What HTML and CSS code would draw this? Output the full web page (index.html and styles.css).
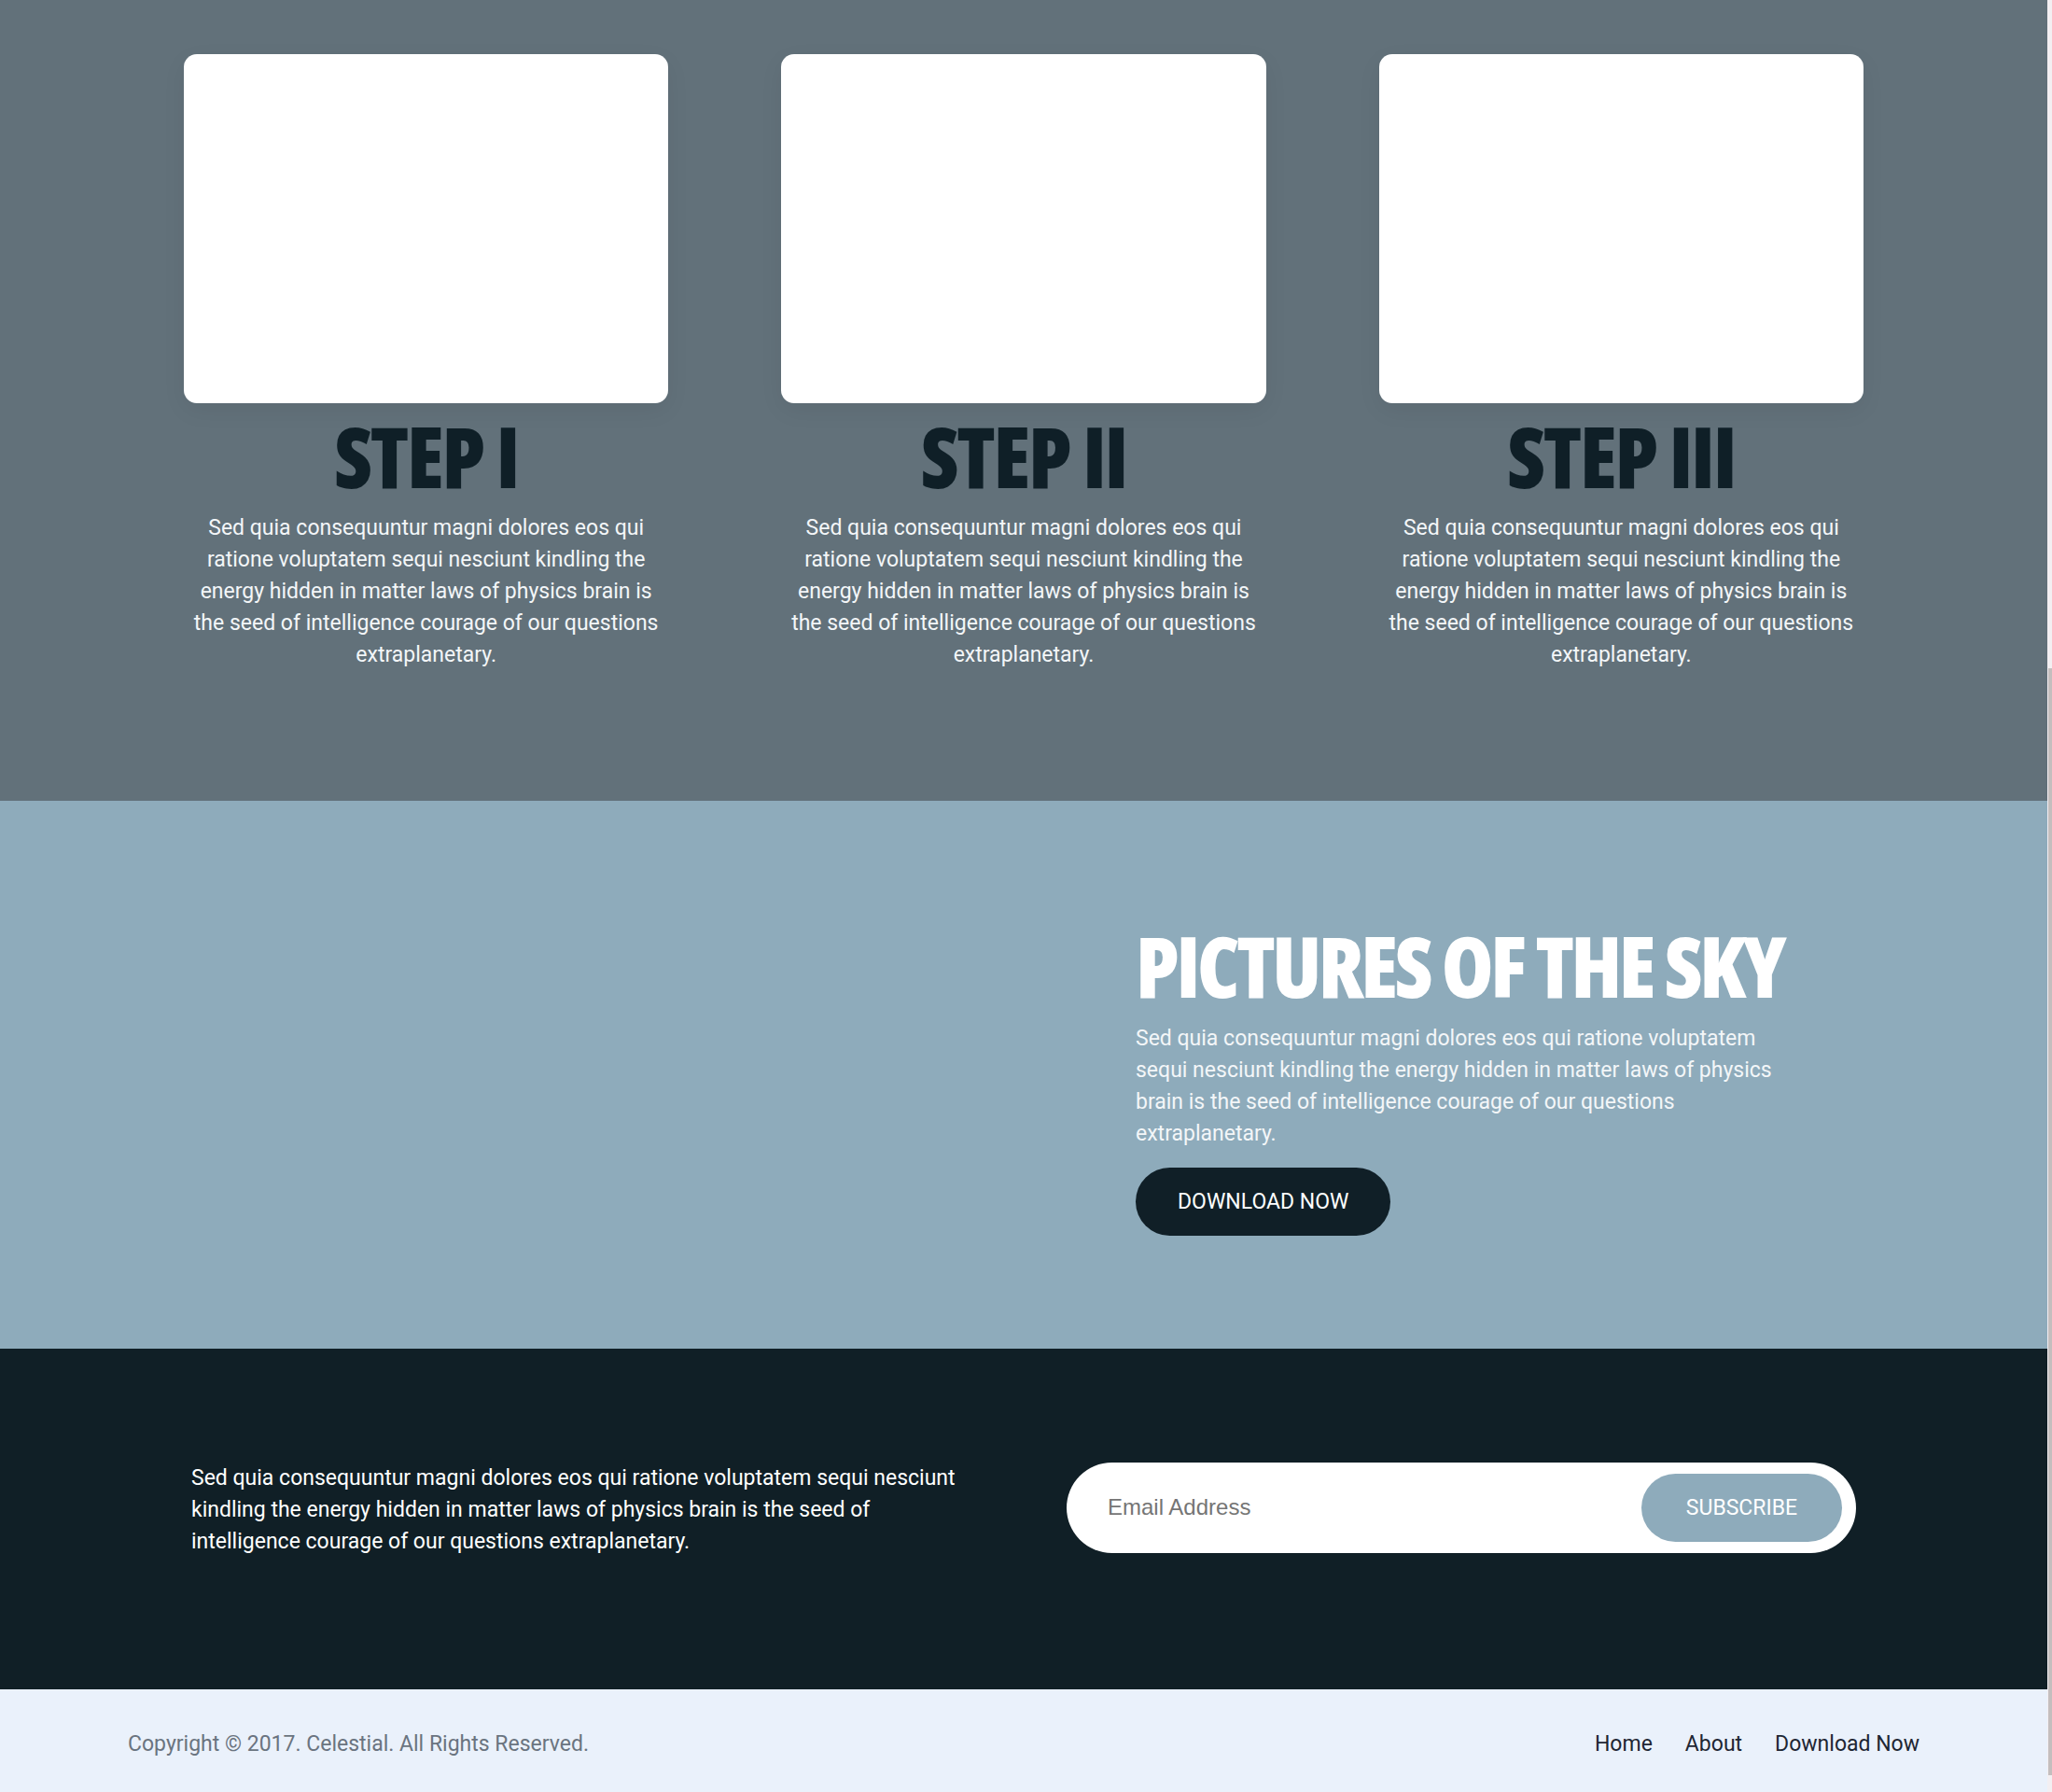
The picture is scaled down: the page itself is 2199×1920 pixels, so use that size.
FILE: index.html
```html
<!DOCTYPE html>
<html lang="en">
<head>
<meta charset="utf-8">
<title>Celestial</title>
<link rel="stylesheet" href="styles.css">
</head>
<body>
<div class="page">
  <section class="steps">
    <div class="container steps-grid">
      <div class="step">
        <div class="step-card"></div>
        <h2 class="step-title">STEP I</h2>
        <p class="step-text">Sed quia consequuntur magni dolores eos qui ratione voluptatem sequi nesciunt kindling the energy hidden in matter laws of physics brain is the seed of intelligence courage of our questions extraplanetary.</p>
      </div>
      <div class="step">
        <div class="step-card"></div>
        <h2 class="step-title">STEP II</h2>
        <p class="step-text">Sed quia consequuntur magni dolores eos qui ratione voluptatem sequi nesciunt kindling the energy hidden in matter laws of physics brain is the seed of intelligence courage of our questions extraplanetary.</p>
      </div>
      <div class="step">
        <div class="step-card"></div>
        <h2 class="step-title">STEP III</h2>
        <p class="step-text">Sed quia consequuntur magni dolores eos qui ratione voluptatem sequi nesciunt kindling the energy hidden in matter laws of physics brain is the seed of intelligence courage of our questions extraplanetary.</p>
      </div>
    </div>
  </section>

  <section class="sky">
    <div class="container sky-grid">
      <div class="sky-media"></div>
      <div class="sky-text">
        <h2 class="sky-title">PICTURES OF THE SKY</h2>
        <p class="sky-copy">Sed quia consequuntur magni dolores eos qui ratione voluptatem sequi nesciunt kindling the energy hidden in matter laws of physics brain is the seed of intelligence courage of our questions extraplanetary.</p>
        <a class="btn-dark" href="#">DOWNLOAD NOW</a>
      </div>
    </div>
  </section>

  <section class="newsletter">
    <div class="container news-grid">
      <p class="news-copy">Sed quia consequuntur magni dolores eos qui ratione voluptatem sequi nesciunt kindling the energy hidden in matter laws of physics brain is the seed of intelligence courage of our questions extraplanetary.</p>
      <form class="subscribe" action="#">
        <input class="subscribe-input" type="email" placeholder="Email Address">
        <button class="subscribe-btn" type="button">SUBSCRIBE</button>
      </form>
    </div>
  </section>

  <footer class="footer">
    <div class="footer-inner">
      <p class="copyright">Copyright © 2017. Celestial. All Rights Reserved.</p>
      <nav class="footer-nav">
        <a href="#">Home</a>
        <a href="#">About</a>
        <a href="#">Download Now</a>
      </nav>
    </div>
  </footer>
</div>
<div class="scrollbar"><div class="scrollbar-thumb"></div></div>
</body>
</html>
```
FILE: styles.css
```css
* { box-sizing: border-box; }

body {
  margin: 0;
  font-family: Roboto, "Liberation Sans", sans-serif;
  font-size: 23px;
  line-height: 34px;
  background: #eaf1fb;
}

.page { margin-right: 5px; }

.container {
  width: 1800px;
  margin: 0 auto;
}

/* ---------- steps ---------- */
.steps {
  background: #62717a;
  padding: 58px 0 139px;
}

.steps-grid {
  display: grid;
  grid-template-columns: repeat(3, 1fr);
  column-gap: 121px;
}

.step-card {
  height: 374px;
  background: #fff;
  border-radius: 14px;
  box-shadow: 0 8px 26px rgba(0, 0, 0, 0.06);
}

.step-title {
  margin: 7px 0 0;
  font-family: "Open Sans", sans-serif;
  font-stretch: 75%;
  font-weight: 800;
  font-size: 90px;
  line-height: 99px;
  letter-spacing: -2.3px;
  text-align: center;
  color: #0f1f27;
}

.step-text {
  margin: 11px 0 0;
  padding: 0 4px;
  text-align: center;
  color: #f3f6f8;
}

/* ---------- sky ---------- */
.sky {
  background: #8eabbb;
  padding: 127px 0 121px;
}

.sky-grid {
  display: grid;
  grid-template-columns: 1020px 700px;
}

.sky-title {
  margin: 0;
  font-family: "Open Sans", sans-serif;
  font-stretch: 75%;
  font-weight: 800;
  font-size: 90px;
  line-height: 99px;
  letter-spacing: -3.4px;
  color: #ffffff;
}

.sky-copy {
  margin: 12px 0 0;
  color: #f3f6f8;
}

.btn-dark {
  display: inline-block;
  margin-top: 19px;
  height: 73px;
  padding: 0 45px;
  border-radius: 37px;
  background: #101f27;
  color: #ffffff;
  line-height: 73px;
  text-decoration: none;
}

/* ---------- newsletter ---------- */
.newsletter {
  background: #101f26;
  padding: 116px 0 141px;
}

.news-grid {
  padding: 0 8px;
  display: grid;
  grid-template-columns: 1fr 846px;
  align-items: center;
}

.news-copy {
  margin: 6px 0 0;
  max-width: 840px;
  color: #ffffff;
}

.subscribe {
  display: flex;
  align-items: center;
  height: 97px;
  padding: 0 15px 0 42px;
  background: #ffffff;
  border-radius: 49px;
}

.subscribe-input {
  flex: 1;
  min-width: 0;
  border: 0;
  outline: 0;
  background: transparent;
  font-family: "Liberation Sans", Arial, sans-serif;
  font-size: 24px;
  color: #333;
}

.subscribe-input::placeholder { color: #757575; }

.subscribe-btn {
  width: 215px;
  height: 73px;
  border: 0;
  border-radius: 37px;
  background: #8eabbb;
  color: #ffffff;
  font-family: Roboto, "Liberation Sans", sans-serif;
  font-size: 23px;
}

/* ---------- footer ---------- */
.footer {
  background: #eaf1fb;
  padding: 42px 0;
}

.footer-inner {
  width: 1920px;
  margin: 0 auto;
  display: flex;
  justify-content: space-between;
  align-items: center;
}

.copyright {
  margin: 0;
  color: #6a7480;
}

.footer-nav {
  display: flex;
  gap: 35px;
}

.footer-nav a {
  color: #1e2633;
  text-decoration: none;
}

/* ---------- browser scrollbar ---------- */
.scrollbar {
  position: fixed;
  top: 0;
  right: 0;
  width: 5px;
  height: 100%;
  background: #f3eff2;
}

.scrollbar-thumb {
  position: absolute;
  top: 716px;
  left: 1px;
  right: 0;
  bottom: 18px;
  background: #c4bebe;
}
```
